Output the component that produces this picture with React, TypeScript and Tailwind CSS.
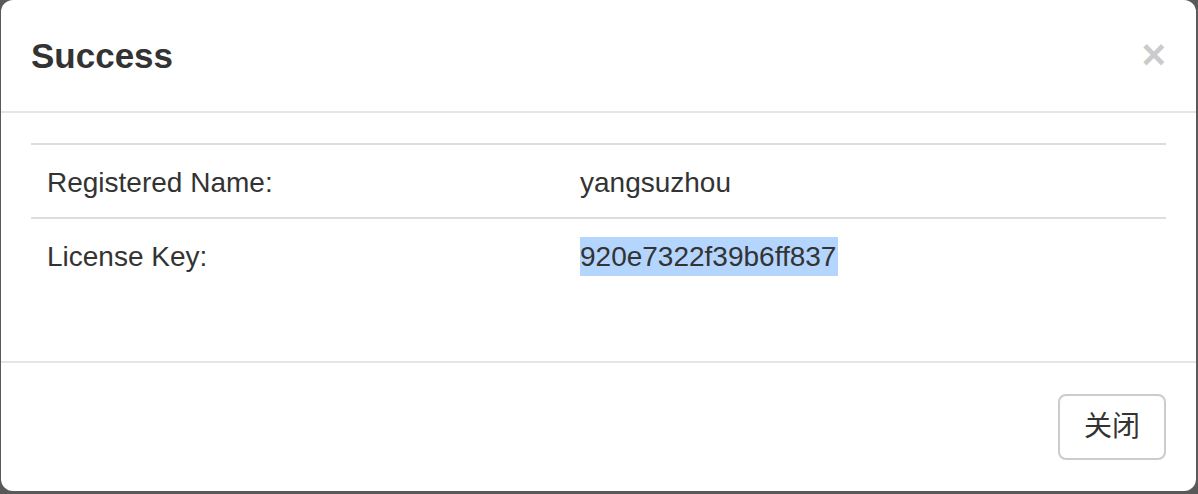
import React from "react";

const rows = [
  { label: "Registered Name:", value: "yangsuzhou", selected: false },
  { label: "License Key:", value: "920e7322f39b6ff837", selected: true },
];

const App = () => {
  return (
    <div
      className="w-[1198px] h-[494px] bg-[#595959] overflow-hidden pl-px"
      style={{ fontFamily: '"Liberation Sans", "Noto Sans CJK SC", Arial, sans-serif' }}
    >
      <div className="w-[1195px] bg-white rounded-[12px] text-[#333] overflow-hidden">
        {/* header */}
        <div className="flex items-center justify-between px-[30px] py-[30px] border-b-2 border-[#e5e5e5]">
          <h4 className="text-[35px] font-bold leading-[51px] text-[#333]">Success</h4>
          <button className="text-[42px] font-bold leading-none text-black opacity-20 -mt-[2px]">×</button>
        </div>

        {/* body */}
        <div className="p-[30px]">
          <table className="w-full border-collapse mb-[40px] text-[28px] leading-[40px]">
            <tbody>
              {rows.map((r) => (
                <tr key={r.label} className="border-t-2 border-[#ddd]">
                  <td className="w-[533px] px-[16px] pt-[18px] pb-[14px] align-top">{r.label}</td>
                  <td className="px-[16px] pt-[18px] pb-[14px] align-top">
                    {r.selected ? (
                      <span className="inline-block bg-[#b4d5fd] leading-[39px] pr-[2px]">{r.value}</span>
                    ) : (
                      r.value
                    )}
                  </td>
                </tr>
              ))}
            </tbody>
          </table>
        </div>

        {/* footer */}
        <div className="flex justify-end px-[30px] pt-[31px] pb-[31px] border-t-2 border-[#e5e5e5]">
          <button className="px-[24px] py-[12px] text-[28px] leading-[38px] text-[#333] bg-white border-2 border-[#ccc] rounded-[8px]">
            关闭
          </button>
        </div>
      </div>
    </div>
  );
};

export default App;
